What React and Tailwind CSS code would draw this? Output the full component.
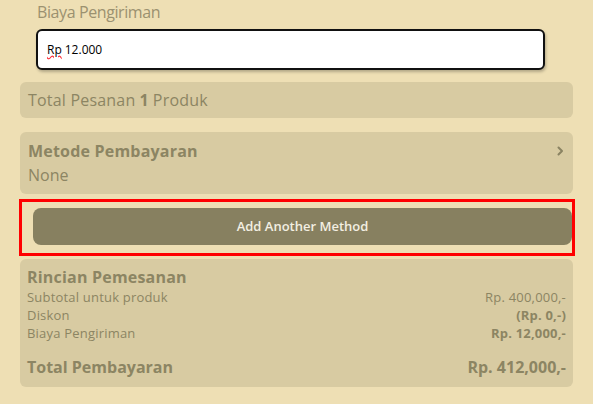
import React from "react";

const font = { fontFamily: '"Open Sans", "Noto Sans", sans-serif' };

function Chevron() {
  return (
    <svg width="9" height="10" viewBox="0 0 9 10" fill="none">
      <path d="M2.5 1.5 L6 5 L2.5 8.5" stroke="#8a8362" strokeWidth="2" strokeLinecap="round" strokeLinejoin="round" />
    </svg>
  );
}

export default function App() {
  return (
    <div className="w-[593px] h-[404px] overflow-hidden bg-[#eedfb4] text-[#8c8563]" style={font}>
      <div className="pl-[37px] pt-[1px] text-[16px] leading-[22px] tracking-[-0.4px] text-[#9b9170]">Biaya Pengiriman</div>

      <div className="ml-[36px] mt-[6px] w-[509px] h-[41px] rounded-[6px] border-2 border-[#111] bg-white shadow-[1px_2px_3px_rgba(0,0,0,0.25)] flex items-center px-[9px] text-[12px] text-black">
        <span className="underline decoration-wavy decoration-red-500">Rp</span>
        <span className="ml-[3px]">12.000</span>
      </div>

      <div className="mx-[20px] mt-[12px] h-[36px] rounded-[6px] bg-[#d8cba2] px-[8px] flex items-center text-[16px] tracking-[0.2px]">
        <span>Total Pesanan</span>
        <span className="font-bold mx-[4px]">1</span>
        <span>Produk</span>
      </div>

      <div className="mx-[20px] mt-[14px] h-[62px] rounded-[6px] bg-[#d8cba2] px-[8px] pt-[8px]">
        <div className="flex items-center justify-between">
          <span className="text-[16px] leading-[22px] font-bold tracking-[0.2px]">Metode Pembayaran</span>
          <Chevron />
        </div>
        <div className="text-[16px] leading-[22px] mt-[2px]">None</div>
      </div>

      <div className="ml-[19px] mr-[18px] mt-[5px] h-[57px] border-[3px] border-[#ff0000] pl-[11px] pt-[6px]">
        <button className="w-full h-[37px] rounded-[8px] bg-[#878060] text-[#f3efe2] text-[13px] font-semibold flex items-center justify-center">
          Add Another Method
        </button>
      </div>

      <div className="mx-[20px] mt-[3px] h-[128px] rounded-[6px] bg-[#d8cba2] px-[7px] pt-[7px]">
        <div className="text-[16px] leading-[22px] font-bold tracking-[0.2px]">Rincian Pemesanan</div>
        <div className="text-[13px] leading-[18px] tracking-[0.2px]">
          <div className="flex justify-between">
            <span>Subtotal untuk produk</span>
            <span>Rp. 400,000,-</span>
          </div>
          <div className="flex justify-between">
            <span>Diskon</span>
            <span className="font-bold">(Rp. 0,-)</span>
          </div>
          <div className="flex justify-between">
            <span>Biaya Pengiriman</span>
            <span className="font-bold">Rp. 12,000,-</span>
          </div>
        </div>
        <div className="flex justify-between mt-[14px] text-[16px] leading-[22px] font-bold">
          <span>Total Pembayaran</span>
          <span>Rp. 412,000,-</span>
        </div>
      </div>
    </div>
  );
}
